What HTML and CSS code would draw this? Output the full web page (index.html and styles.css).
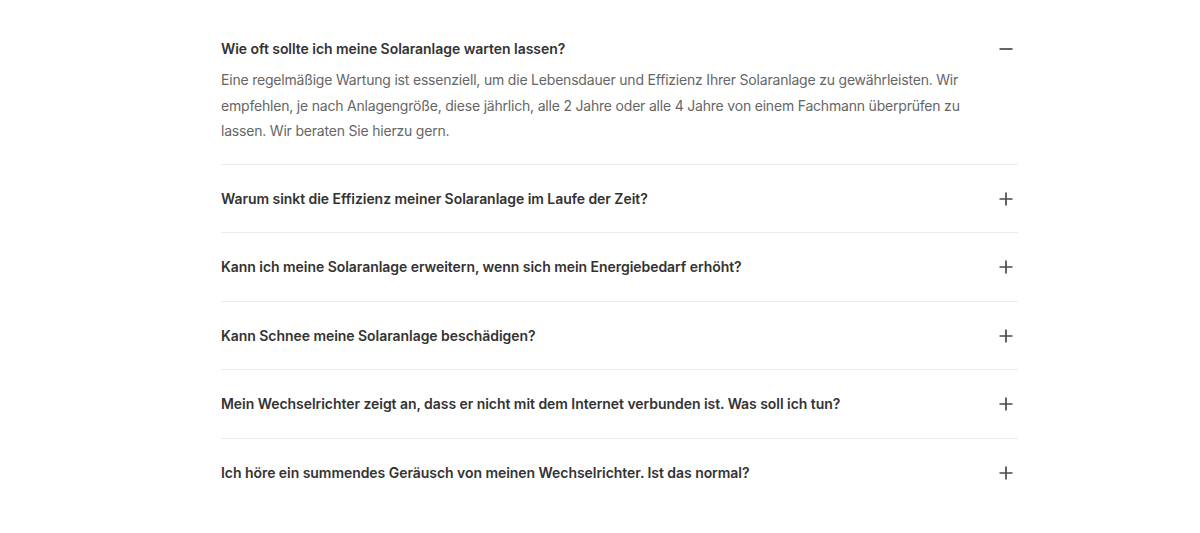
FILE: index.html
```html
<!DOCTYPE html>
<html lang="de">
<head>
<meta charset="utf-8">
<link rel="stylesheet" href="styles.css">
</head>
<body>
<section class="faq">
  <div class="item open">
    <div class="q">
      <span class="q-text">Wie oft sollte ich meine Solaranlage warten lassen?</span>
      <svg class="icon" viewBox="0 0 16 16" width="16" height="16"><path d="M1.5 8h13" /></svg>
    </div>
    <p class="a">Eine regelmäßige Wartung ist essenziell, um die Lebensdauer und Effizienz Ihrer Solaranlage zu gewährleisten. Wir empfehlen, je nach Anlagengröße, diese jährlich, alle 2 Jahre oder alle 4 Jahre von einem Fachmann überprüfen zu lassen. Wir beraten Sie hierzu gern.</p>
  </div>
  <div class="item">
    <div class="q">
      <span class="q-text">Warum sinkt die Effizienz meiner Solaranlage im Laufe der Zeit?</span>
      <svg class="icon" viewBox="0 0 16 16" width="16" height="16"><path d="M1.5 8h13M8 1.5v13" /></svg>
    </div>
  </div>
  <div class="item">
    <div class="q">
      <span class="q-text">Kann ich meine Solaranlage erweitern, wenn sich mein Energiebedarf erhöht?</span>
      <svg class="icon" viewBox="0 0 16 16" width="16" height="16"><path d="M1.5 8h13M8 1.5v13" /></svg>
    </div>
  </div>
  <div class="item">
    <div class="q">
      <span class="q-text">Kann Schnee meine Solaranlage beschädigen?</span>
      <svg class="icon" viewBox="0 0 16 16" width="16" height="16"><path d="M1.5 8h13M8 1.5v13" /></svg>
    </div>
  </div>
  <div class="item">
    <div class="q">
      <span class="q-text">Mein Wechselrichter zeigt an, dass er nicht mit dem Internet verbunden ist. Was soll ich tun?</span>
      <svg class="icon" viewBox="0 0 16 16" width="16" height="16"><path d="M1.5 8h13M8 1.5v13" /></svg>
    </div>
  </div>
  <div class="item last">
    <div class="q">
      <span class="q-text">Ich höre ein summendes Geräusch von meinen Wechselrichter. Ist das normal?</span>
      <svg class="icon" viewBox="0 0 16 16" width="16" height="16"><path d="M1.5 8h13M8 1.5v13" /></svg>
    </div>
  </div>
</section>
</body>
</html>
```

FILE: styles.css
```css
html, body {
  margin: 0;
  padding: 0;
  background: #ffffff;
}

body {
  font-family: Inter, "Liberation Sans", Arial, sans-serif;
  -webkit-font-smoothing: antialiased;
}

.faq {
  width: 797px;
  margin: 15px auto 0 221px;
}

.item {
  border-bottom: 1px solid #ececec;
  padding: 24px 0 23.5px;
}

.item.open {
  padding-bottom: 20px;
}

.item.last {
  border-bottom: none;
}

.q {
  display: flex;
  align-items: center;
  justify-content: space-between;
  height: 20px;
}

.q-text {
  font-size: 14px;
  font-weight: 600;
  color: #333333;
  line-height: 20px;
  letter-spacing: -0.05px;
}

.icon {
  flex: none;
  margin-right: 4px;
  stroke: #4a4a4a;
  stroke-width: 1.7;
  fill: none;
}

.a {
  margin: 8px 0 0;
  max-width: 757px;
  font-size: 14px;
  line-height: 25.5px;
  color: #666666;
  letter-spacing: -0.2px;
}
```
